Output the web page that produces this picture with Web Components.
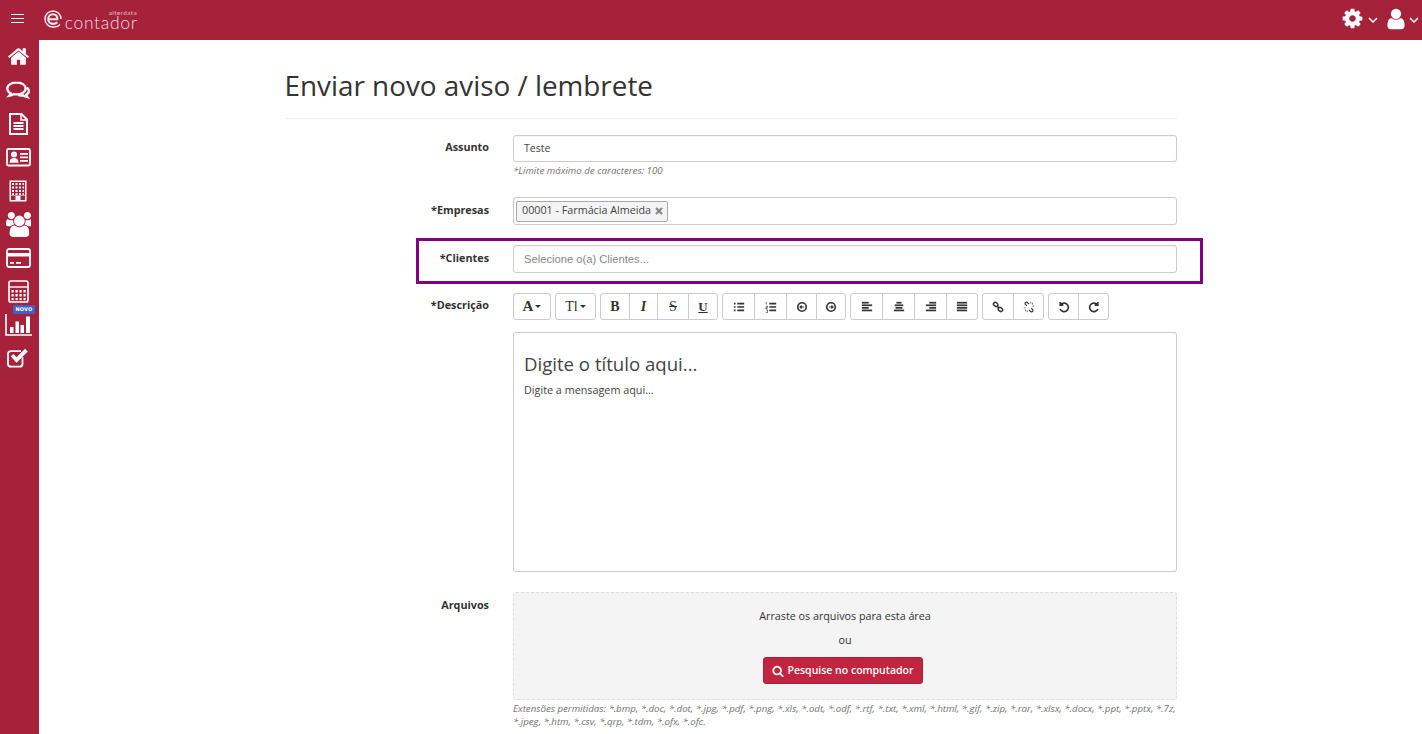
<!DOCTYPE html>
<html lang="pt-BR"><head><meta charset="utf-8"><title>Enviar novo aviso</title>
<style>
html,body{margin:0;padding:0;height:734px;overflow:hidden;background:#fff;font-family:"Open Sans","Liberation Sans",sans-serif;color:#333}
</style></head><body>
<app-shell>
  <page-topbar slot="top"></page-topbar>
  <page-sidebar slot="side"></page-sidebar>
  <page-heading>Enviar novo aviso / lembrete</page-heading>
  <form-row label="Assunto" pad="7" gap="20">
    <text-box value="Teste"></text-box>
    <help-note style="margin-top:2px">*Limite máximo de caracteres: 100</help-note>
  </form-row>
  <form-row label="*Empresas" pad="8" gap="20">
    <chip-box><tag-chip>00001 - Farmácia Almeida</tag-chip></chip-box>
  </form-row>
  <form-row label="*Clientes" pad="8" gap="20" marked>
    <text-box placeholder="Selecione o(a) Clientes..."></text-box>
  </form-row>
  <form-row label="*Descrição" pad="7" gap="20">
    <editor-toolbar></editor-toolbar>
    <editor-area></editor-area>
  </form-row>
  <form-row label="Arquivos" pad="8" gap="0">
    <drop-zone></drop-zone>
    <help-note style="margin-top:2px">Extensões permitidas: *.bmp, *.doc, *.dot, *.jpg, *.pdf, *.png, *.xls, *.odt, *.odf, *.rtf, *.txt, *.xml, *.html, *.gif, *.zip, *.rar, *.xlsx, *.docx, *.ppt, *.pptx, *.7z, *.jpeg, *.htm, *.csv, *.qrp, *.tdm, *.ofx, *.ofc.</help-note>
  </form-row>
</app-shell>
<script>
const FA={
home:'M1472 992v480q0 26-19 45t-45 19h-384v-384h-256v384h-384q-26 0-45-19t-19-45v-480q0-1 .5-3t.5-3l575-474 575 474q1 2 1 6zm223-69l-62 74q-8 9-21 11h-3q-13 0-21-7l-692-577-692 577q-12 8-24 7-13-2-21-11l-62-74q-8-10-7-23.500t11-21.500l719-599q32-26 76-26t76 26l244 204v-195q0-14 9-23t23-9h192q14 0 23 9t9 23v408l219 182q10 8 11 21.500t-7 23.500z',
cog:'M1152 896q0-106-75-181t-181-75-181 75-75 181 75 181 181 75 181-75 75-181zm512-109v222q0 12-8 23t-20 13l-185 28q-19 54-39 91 35 50 107 138 10 12 10 25t-9 23q-27 37-99 108t-94 71q-12 0-26-9l-138-108q-44 23-91 38-16 136-29 186-7 28-36 28h-222q-14 0-24.500-8.500t-11.500-21.500l-28-184q-49-16-90-37l-141 107q-10 9-25 9-14 0-25-11-126-114-165-168-7-10-7-23 0-12 8-23 15-21 51-66.500t54-70.500q-27-50-41-99l-183-27q-13-2-21-12.500t-8-23.500v-222q0-12 8-23t19-13l186-28q14-46 39-92-40-57-107-138-10-12-10-24 0-10 9-23 26-36 98.500-107.500t94.500-71.500q13 0 26 10l138 107q44-23 91-38 16-136 29-186 7-28 36-28h222q14 0 24.500 8.500t11.500 21.500l28 184q49 16 90 37l142-107q9-9 24-9 13 0 25 10 129 119 165 170 7 8 7 22 0 12-8 23-15 21-51 66.500t-54 70.500q26 50 41 98l183 28q13 2 21 12.500t8 23.500z',
user:'M1536 1399q0 109-62.500 187t-150.500 78h-854q-88 0-150.500-78t-62.500-187q0-85 8.500-160.500t31.500-152 58.500-131 94-89 134.500-34.500q131 128 313 128t313-128q76 0 134.500 34.500t94 89 58.500 131 31.500 152 8.500 160.500zm-256-887q0 159-112.500 271.500t-271.500 112.500-271.500-112.500-112.500-271.500 112.500-271.500 271.500-112.500 271.500 112.500 112.500 271.500z',
users:'M593 896q-162 5-265 128h-134q-82 0-138-40.500t-56-118.500q0-353 124-353 6 0 43.500 21t97.500 42.500 119 21.500q67 0 133-23-5 37-5 66 0 139 81 256zm1071 637q0 120-73 189.500t-194 69.500h-874q-121 0-194-69.500t-73-189.500q0-53 3.500-103.500t14-109 26.500-108.500 43-97.500 62-81 85.500-53.500 111.500-20q10 0 43 21.500t73 48 107 48 135 21.500 135-21.500 107-48 73-48 43-21.500q61 0 111.500 20t85.500 53.500 62 81 43 97.500 26.500 108.500 14 109 3.500 103.500zm-1024-1277q0 106-75 181t-181 75-181-75-75-181 75-181 181-75 181 75 75 181zm704 384q0 159-112.500 271.500t-271.500 112.500-271.500-112.500-112.500-271.500 112.500-271.500 271.500-112.500 271.500 112.500 112.500 271.500zm576 225q0 78-56 118.500t-138 40.500h-134q-103-123-265-128 81-117 81-256 0-29-5-66 66 23 133 23 59 0 119-21.500t97.500-42.500 43.500-21q124 0 124 353zm-128-609q0 106-75 181t-181 75-181-75-75-181 75-181 181-75 181 75 75 181z',
search:'M1216 832q0-185-131.500-316.500t-316.500-131.500-316.500 131.500-131.500 316.500 131.500 316.500 316.500 131.500 316.500-131.500 131.500-316.500zm512 832q0 52-38 90t-90 38q-54 0-90-38l-343-342q-179 124-399 124-143 0-273.500-55.500t-225-150-150-225-55.500-273.500 55.500-273.500 150-225 225-150 273.500-55.500 273.500 55.500 225 150 150 225 55.500 273.500q0 220-124 399l343 343q37 37 37 90z'};
const fa=(n,w,h)=>`<svg width="${w}" height="${h||w}" viewBox="0 0 1792 1792" fill="currentColor" aria-hidden="true"><path d="${FA[n]}"/></svg>`;
const SIDE={
home:fa('home',23),
comments:`<svg width="24" height="20" viewBox="0 -1 24 20" fill="none" stroke="currentColor" stroke-width="2.300"><path d="M10.500 1.300c-5 0-9.200 2.700-9.200 6.200 0 2 1.400 3.800 3.400 4.900-.3 1-.8 1.800-1.500 2.500 1.700-.2 3.200-.9 4.400-1.800 .9 .2 1.800 .3 2.900 .3 5 0 9.200-2.600 9.200-5.900s-4.200-6.200-9.200-6.200z"/><path d="M21 6.500c1.100 1 1.800 2 1.800 3.400 0 1.600-1.100 3-2.700 3.900.2 1 .7 1.700 1.300 2.400-1.600-.2-3-.8-4-1.700-1.800.3-3.600.2-5.200-.5"/></svg>`,
file:`<svg width="19" height="22" viewBox="0 0 19 22" fill="none" stroke="currentColor" stroke-width="2"><path d="M1 1h11.500l5.500 5.500V21H1z"/><path d="M12 1v6h6" stroke-width="1.500"/><path d="M4.500 10h10M4.500 13h10M4.500 16h10" stroke-width="1.800"/></svg>`,
card:`<svg width="25" height="19" viewBox="0 0 25 19"><rect x="1" y="1" width="23" height="16.500" rx="1.500" fill="none" stroke="currentColor" stroke-width="1.800"/><g fill="currentColor"><circle cx="8" cy="6.500" r="3"/><path d="M3.500 14.800c0-3.300 1.500-4.800 4.500-4.800s4.500 1.500 4.500 4.800z"/><path d="M14 5h8v1.800h-8zM14 8.500h8v1.800h-8zM14 12h8v1.800h-8z"/></g></svg>`,
building:`<svg width="18" height="22" viewBox="0 0 18 22"><path d="M.5 .5h17v21H.5z" fill="#fff"/><g fill="#a6213a"><path d="M2 2h14v13.500H2z"/><path d="M2 16h4.500v4H2zM11.500 16H16v4h-4.500z"/></g><g fill="#fff"><path d="M3 3h2v2H3zM6.500 3h2v2h-2zM10 3h2v2h-2zM13.500 3H15v2h-1.500zM3 6.500h2v2H3zM6.500 6.500h2v2h-2zM10 6.500h2v2h-2zM13.500 6.500H15v2h-1.500zM3 10h2v2H3zM6.500 10h2v2h-2zM10 10h2v2h-2zM13.500 10H15v2h-1.500zM3 13.200h2v1.800H3zM6.500 13.200h2v1.800h-2zM10 13.200h2v1.800h-2zM13.500 13.200H15v1.800h-1.500z"/></g></svg>`,
users:fa('users',25),
credit:`<svg width="25" height="20" viewBox="0 0 25 20"><rect x="1" y="1" width="23" height="18" rx="2" fill="none" stroke="currentColor" stroke-width="1.800"/><path d="M1 5h23v3.500H1z" fill="currentColor"/><path d="M4 14h4v1.800H4zM10 14h5v1.800h-5z" fill="currentColor"/></svg>`,
calc:`<svg width="21" height="23" viewBox="0 0 21 23"><rect x="1" y="1" width="19" height="21" rx="2" fill="none" stroke="currentColor" stroke-width="1.700"/><path d="M1.500 7h18" stroke="currentColor" stroke-width="1.400"/><g fill="currentColor"><path d="M3.500 10h2.200v2.500H3.500zM7.500 10h2.200v2.500H7.500zM11.500 10h2.200v2.500h-2.200zM15.500 10h2.200v2.500h-2.200zM3.500 14h2.200v2.500H3.500zM7.500 14h2.200v2.500H7.500zM11.500 14h2.200v2.500h-2.200zM15.500 14h2.200v2.500h-2.200zM3.500 18h2.200v2.200H3.500zM7.500 18h2.200v2.200H7.500zM11.500 18h2.200v2.200h-2.200zM15.500 18h2.200v2.200h-2.200z"/></g></svg>`,
chart:`<svg width="27" height="22" viewBox="0 0 27 22"><path d="M1 0v21h26" fill="none" stroke="currentColor" stroke-width="1.600"/><g fill="currentColor"><path d="M5 13h3.500v6H5zM10.500 7.500H14V19h-3.500zM15.500 11H19v8h-3.500zM21 2.500h4V19h-4z"/></g></svg>`,
check:`<svg width="22" height="20" viewBox="0 0 22 20"><path d="M15.500 9v6.500c0 1.700-1.300 3-3 3H4c-1.700 0-3-1.300-3-3V6c0-1.700 1.300-3 3-3h10" fill="none" stroke="currentColor" stroke-width="1.800" transform="translate(0 .2)"/><path d="M3.800 8.500 6.300 6l3.200 3.200L18 .8l2.800 2.700L9.500 14.700z" fill="currentColor"/></svg>`};
const stroke=(inner,w=12,h=12)=>`<svg width="${w}" height="${h}" viewBox="0 0 14 14" fill="none" stroke="currentColor" aria-hidden="true">${inner}</svg>`;
const lines=(spec)=>stroke(spec.map((s,i)=>`<path d="M${s[0]} ${2+i*3}h${s[1]}" stroke-width="2"/>`).join(''));
const TOOL={
list:stroke('<path d="M5 3h8M5 7h8M5 11h8" stroke-width="2"/><path d="M1 3h2M1 7h2M1 11h2" stroke-width="2"/>'),
olist:stroke('<path d="M5 3h8M5 7h8M5 11h8" stroke-width="2"/><path d="M1.500 1v3M1 6h2v1.500H1V9h2M1 10.500h2v3H1" stroke-width=".8"/>'),
outdent:stroke('<circle cx="7" cy="7" r="5" stroke-width="1.900"/><path d="M4.500 7h5M6.500 5.300 4.800 7l1.700 1.700" stroke-width="1.400"/>'),
indent:stroke('<circle cx="7" cy="7" r="5" stroke-width="1.900"/><path d="M4.500 7h5M7.500 5.300 9.200 7 7.500 8.700" stroke-width="1.400"/>'),
left:lines([[1,8],[1,12],[1,8],[1,12]]),
center:lines([[4,6],[2,10],[3,8],[1,12]]),
right:lines([[5,8],[1,12],[5,8],[1,12]]),
just:lines([[1,12],[1,12],[1,12],[1,12]]),
link:stroke('<rect x="1.500" y="1.800" width="5.500" height="4" rx="2" transform="rotate(38 4 4)" stroke-width="1.700"/><rect x="7" y="8" width="5.500" height="4" rx="2" transform="rotate(38 10 10)" stroke-width="1.700"/><path d="M5.500 5.500l3 3" stroke-width="1.600"/>'),
unlink:stroke('<path d="M4.500 5.500 3 4.200c-1-1-.6-2.300.3-2.700 .9-.4 1.700-.1 2.300.6L7 3.500M9.500 8.500 11 9.800c1 1 .6 2.300-.3 2.700-.9.4-1.700.1-2.300-.6L7 10.500" stroke-width="1.400"/><path d="M1 8h2M3 10v2M11 4V2M11 6h2M9 1v2M5 11v2" stroke-width=".8"/>'),
undo:stroke('<path d="M3.200 4.300A5 5 0 1 1 2.500 9.300M2.600 1.300v3.600h3.600" stroke-width="2"/>'),
redo:stroke('<path d="M10.800 4.300A5 5 0 1 0 11.500 9.300M11.400 1.300v3.600H7.800" stroke-width="2"/>')};
class El extends HTMLElement{
  render(css,html){if(!this.shadowRoot)this.attachShadow({mode:'open'});this.shadowRoot.innerHTML=`<style>${css}</style>${html}`;}
}
customElements.define('app-shell',class extends El{connectedCallback(){this.render(`
:host{display:grid;grid-template:40px 694px/39px 1fr;height:734px;overflow:hidden}
slot[name=top]{display:block;grid-column:1/3}
main{display:block;padding:0 0 0 246px;width:892px;height:694px}`,
`<slot name="top"></slot><slot name="side"></slot><main><slot></slot></main>`);}});
customElements.define('page-topbar',class extends El{connectedCallback(){this.render(`
:host{display:flex;align-items:center;box-sizing:border-box;height:40px;background:#a6213a;color:#fff;padding:0 3px 3px 11px}
.burger{width:13px;height:9px;display:flex;flex-direction:column;justify-content:space-between}
.burger i{display:block;height:1px;background:#fff}
.logo{display:flex;align-items:center;margin-left:20px}
.logo svg{display:block}
.word{display:flex;flex-direction:column;align-items:flex-end;margin-left:3px;width:72px;padding-top:1px}
.alt{font:400 6.500px/6px "Lato",sans-serif;letter-spacing:.35px;color:#e3bcc4}
.con{font:300 17.500px/13px "Lato",sans-serif;letter-spacing:.7px;margin-right:-.7px;color:#f0dbe0}
.sp{flex:1}
.it{display:flex;align-items:center;gap:4px}
.it svg{display:block}
.ch{margin-top:3px}
.it+.it{margin-left:6px}`,
`<div class="burger"><i></i><i></i><i></i></div>
<div class="logo"><svg width="18" height="18" viewBox="0 0 18 18" fill="none" stroke="#f6e8eb" stroke-width="2.100"><path d="M4.500 9.200h8.800c.4-3-1.800-5-4.300-5-2.800 0-4.800 2.200-4.800 4.900s2 4.800 4.900 4.800c1.800 0 3-.6 4.200-1.700"/><path d="M16 14.500A8 8 0 0 1 9 17 8 8 0 1 1 17 9" stroke-width="1.500"/></svg>
<div class="word"><span class="alt">alterdata</span><span class="con">contador</span></div></div>
<div class="sp"></div>
<div class="it">${fa('cog',23)}<svg class="ch" width="10" height="6" viewBox="0 0 10 6" fill="none" stroke="#fff" stroke-width="1.500"><path d="M1 1l4 4 4-4"/></svg></div>
<div class="it" style="gap:1px">${fa('user',24)}<svg class="ch" width="10" height="6" viewBox="0 0 10 6" fill="none" stroke="#fff" stroke-width="1.500"><path d="M1 1l4 4 4-4"/></svg></div>`);}});
customElements.define('page-sidebar',class extends El{connectedCallback(){
const keys=['home','comments','file','card','building','users','credit','calc','chart','check'];
this.render(`
:host{display:block;box-sizing:border-box;width:39px;height:694px;background:#a6213a;color:#fff;padding-right:3px}
.i{height:33.500px;display:flex;align-items:center;justify-content:center;position:relative}
.i svg{display:block}
.b{position:absolute;left:13px;top:-3px;font:700 5px/9px "DejaVu Sans",sans-serif;background:#3f62c8;color:#fff;border-radius:1.500px;padding:0 2.500px;letter-spacing:.1px}`,
keys.map(k=>`<div class="i">${SIDE[k]}${k==='chart'?'<span class="b">NOVO</span>':''}</div>`).join(''));}});
customElements.define('page-heading',class extends El{connectedCallback(){this.render(`
:host{display:block;height:79px;box-sizing:border-box;border-bottom:1px solid #eee;margin-bottom:16px}
h1{margin:0;padding-top:25px;font:400 27.850px/40px "Open Sans",sans-serif;color:#333;margin-left:-.5px}`,`<h1><slot></slot></h1>`);}});
customElements.define('form-row',class extends El{connectedCallback(){
const pad=+this.getAttribute('pad')||8,gap=this.getAttribute('gap')||0;
this.render(`
:host{display:grid;grid-template-columns:204px 664px;column-gap:24px;margin-bottom:${gap}px;position:relative}
label{font:700 10.800px/15px "Open Sans",sans-serif;text-align:right;color:#333;padding-top:${pad-3}px}
.f{min-width:0}
.mark{position:absolute;left:131px;top:-7px;width:781px;height:40px;border:3px solid #800080;pointer-events:none}`,
`<label>${this.getAttribute('label')}</label><div class="f"><slot></slot></div>${this.hasAttribute('marked')?'<div class="mark"></div>':''}`);}});
customElements.define('text-box',class extends El{connectedCallback(){
const v=this.getAttribute('value');
this.render(`
:host{box-sizing:border-box;height:${v?27:28}px;border:1px solid #ccc;border-radius:3px;padding:0 10px;background:#fff;box-shadow:inset 0 1px 1px rgba(0,0,0,.04);display:flex;align-items:center}
span{font:400 10.500px/1 "Open Sans",sans-serif;color:#444}
.p{font:400 11.200px/1 "Liberation Sans",sans-serif;color:#888;padding-top:1px}`,
v?`<span>${v}</span>`:`<span class="p">${this.getAttribute('placeholder')}</span>`);}});
customElements.define('help-note',class extends El{connectedCallback(){this.render(`
:host{display:block;font:italic 400 9.700px/13px "Open Sans",sans-serif;color:#737373}`,`<slot></slot>`);}});
customElements.define('chip-box',class extends El{connectedCallback(){this.render(`
:host{display:flex;align-items:center;box-sizing:border-box;height:28px;border:1px solid #ccc;border-radius:3px;padding:0 2px;background:#fff}`,`<slot></slot>`);}});
customElements.define('tag-chip',class extends El{connectedCallback(){this.render(`
:host{display:inline-flex;align-items:center;box-sizing:border-box;height:21px;border:1px solid #aaa;border-radius:2px;background:#f4f4f4;padding:0 4px 1px 5px;font:400 10.750px/1 "Open Sans",sans-serif;color:#444;gap:4px}
svg{display:block}`,`<slot></slot><svg width="8" height="8" viewBox="0 0 8 8" stroke="#888" stroke-width="2.200"><path d="M1 1l6 6M7 1 1 7"/></svg>`);}});
customElements.define('editor-toolbar',class extends El{connectedCallback(){
const serif=(t,st='')=>`<span style="font:700 14px/1 'Liberation Serif',serif;color:#333;${st}">${t}</span>`;
const caret='<i class="c"></i>';
const g=(items)=>`<div class="g">${items.map(([w,c])=>`<div class="b" style="width:${w}px">${c}</div>`).join('')}</div>`;
this.render(`
:host{display:flex;gap:4px;height:27px;margin-bottom:12px}
.g{display:flex;box-sizing:border-box;height:27px;border:1px solid #ccc;border-radius:3px;background:#fff}
.b{display:flex;align-items:center;justify-content:center;box-sizing:border-box;border-left:1px solid #ccc;color:#333;gap:2px}
.b:first-child{border-left:0}
.c{display:block;width:0;height:0;border:3px solid transparent;border-top-color:#333;border-bottom:0}
svg{display:block}`,
g([[36,serif('A','font-size:15px')+caret]])+
g([[39,serif('Tl','font-size:14px;font-weight:400')+caret]])+
g([[28,serif('B')],[28,serif('I','font-style:italic')],[31,serif('S','text-decoration:line-through;font-weight:400')],[29,serif('U','text-decoration:underline;font-size:13px')]])+
g([[31,TOOL.list],[32,TOOL.olist],[30,TOOL.outdent],[29,TOOL.indent]])+
g([[31,TOOL.left],[32,TOOL.center],[32,TOOL.right],[31,TOOL.just]])+
g([[30,TOOL.link],[30,TOOL.unlink]])+
g([[29,TOOL.undo],[30,TOOL.redo]]));}});
customElements.define('editor-area',class extends El{connectedCallback(){this.render(`
:host{display:block;box-sizing:border-box;height:240px;border:1px solid #ccc;border-radius:3px;padding:19px 10px 0;background:#fff}
h3{margin:0;font:400 18.600px/24px "Open Sans",sans-serif;color:#444}
p{margin:7px 0 0;font:400 10.800px/14px "Open Sans",sans-serif;color:#444}`,
`<h3>Digite o título aqui...</h3><p>Digite a mensagem aqui...</p>`);}});
customElements.define('drop-zone',class extends El{connectedCallback(){this.render(`
:host{display:flex;flex-direction:column;align-items:center;box-sizing:border-box;height:108px;border:1px dashed #ddd;border-radius:3px;background:#f4f4f4;padding-top:16px;font:400 10.750px/15px "Open Sans",sans-serif;color:#333}
p{margin:0 0 9px}
button{display:flex;align-items:center;justify-content:center;gap:3px;box-sizing:border-box;width:160px;height:27px;margin:0 4px 0 0;border:1px solid #ac1f38;border-radius:3px;background:#c1253f;color:#fff;font:600 10.500px/1 "Open Sans",sans-serif;padding:0}`,
`<p>Arraste os arquivos para esta área</p><p>ou</p><button type="button">${fa('search',12)}Pesquise no computador</button>`);}});
</script>
</body></html>
